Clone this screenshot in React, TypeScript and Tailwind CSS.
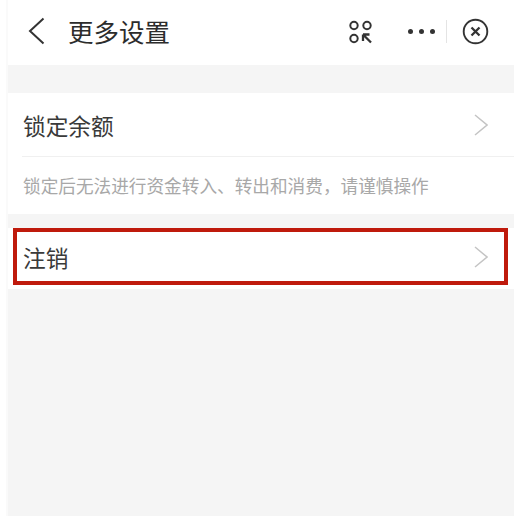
const FONT = "font-['Noto_Sans_CJK_SC','Liberation_Sans',sans-serif]";

function Row({ label }: { label: string }) {
  return (
    <div className="flex h-full items-center justify-between pl-[15px] pr-[26px]">
      <span className="translate-y-[1.5px] text-[22.7px] leading-none text-[#3a3a3a]">{label}</span>
      <svg width="14" height="22" viewBox="0 0 14 22" fill="none">
        <path d="m1 1 12 10L1 21" stroke="#c4c4c4" strokeWidth="1.5" />
      </svg>
    </div>
  );
}

function Header() {
  return (
    <div className="flex h-[65px] items-center bg-white pl-[19px] pr-[25px]">
      <svg width="20" height="28" viewBox="0 0 20 28" fill="none" className="mb-[3px] text-[#333]">
        <path d="M16.5 1.5 3 14l13.5 12.5" stroke="currentColor" strokeWidth="2" />
      </svg>
      <span className="mb-[3px] ml-[21px] text-[25.5px] leading-none text-[#2c2c2c]">更多设置</span>
      <div className="mb-[2px] ml-auto flex items-center">
        <svg width="24" height="24" viewBox="0 0 24 24" fill="none" stroke="#333" strokeWidth="2">
          <circle cx="5" cy="5.5" r="3.7" />
          <circle cx="18" cy="5.5" r="3.7" />
          <circle cx="5" cy="18.5" r="3.7" />
          <path d="M14 14.5h6.5M14 14.5V21M14 14.5l8 8" strokeWidth="2.3" />
        </svg>
        <div className="ml-[35px] flex gap-[6px]">
          <span className="h-[5px] w-[5px] rounded-full bg-[#333]" />
          <span className="h-[5px] w-[5px] rounded-full bg-[#333]" />
          <span className="h-[5px] w-[5px] rounded-full bg-[#333]" />
        </div>
        <div className="ml-[11px] h-[23px] w-px bg-[#e4e4e4]" />
        <svg width="27" height="27" viewBox="0 0 27 27" fill="none" stroke="#333" className="ml-[15px]">
          <circle cx="13.5" cy="13.5" r="11.8" strokeWidth="1.9" />
          <path d="m9.5 9.5 8 8M17.5 9.5l-8 8" strokeWidth="2.3" />
        </svg>
      </div>
    </div>
  );
}

export default function App() {
  return (
    <div className={`${FONT} flex h-[516px] w-[515px] bg-white pl-[6px] pr-px`}>
      <div className="flex w-full flex-col border-l-2 border-[#fafafa]">
        <Header />
        <div className="h-[28px] bg-[#f5f5f5]" />
        <div className="bg-white">
          <div className="h-[63px]">
            <Row label="锁定余额" />
          </div>
          <div className="ml-[14px] h-px bg-[#f0f0f0]" />
          <div className="flex h-[57px] items-center pl-[15px] text-[17.65px] leading-none text-[#a8a8a8]">
            {'锁定后无法进行资金转入、转出和消费\uFF0C请谨慎操作'}
          </div>
        </div>
        <div className="h-[14px] bg-[#f5f5f5]" />
        <div className="relative h-[61px] bg-white pb-[4px]">
          <Row label="注销" />
          <div className="absolute left-[5px] top-0 h-[57px] w-[495px] border-[4px] border-[#bf1a0c]" />
        </div>
        <div className="flex-1 bg-[#f5f5f5]" />
      </div>
    </div>
  );
}
